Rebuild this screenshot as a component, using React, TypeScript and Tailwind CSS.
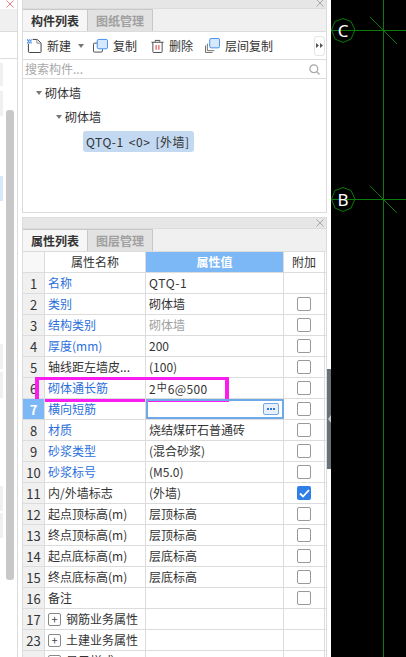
import React from "react";

const BLUE = "text-[#2b6fdc]";

type Row = {
  no: number;
  name: string;
  value?: React.ReactNode;
  blue?: boolean;
  muted?: boolean;
  box?: boolean;
  checked?: boolean;
  group?: boolean;
};

const ROWS: Row[] = [
  { no: 1, name: "名称", value: <span className="tracking-[0.6px]">QTQ-1</span>, blue: true },
  { no: 2, name: "类别", value: "砌体墙", blue: true, box: true },
  { no: 3, name: "结构类别", value: "砌体墙", blue: true, muted: true, box: true },
  { no: 4, name: "厚度(mm)", value: "200", blue: true, box: true },
  { no: 5, name: "轴线距左墙皮...", value: "(100)", box: true },
  {
    no: 6,
    name: "砌体通长筋",
    value: (
      <>
        2<span className="text-[10px] align-[3px] mx-[1px]">中</span>
        <span className="tracking-[0.4px]">6@500</span>
      </>
    ),
    blue: true,
    box: true,
  },
  { no: 7, name: "横向短筋", blue: true, box: true },
  { no: 8, name: "材质", value: "烧结煤矸石普通砖", blue: true, box: true },
  { no: 9, name: "砂浆类型", value: "(混合砂浆)", blue: true, box: true },
  { no: 10, name: "砂浆标号", value: "(M5.0)", blue: true, box: true },
  { no: 11, name: "内/外墙标志", value: "(外墙)", box: true, checked: true },
  { no: 12, name: "起点顶标高(m)", value: "层顶标高", box: true },
  { no: 13, name: "终点顶标高(m)", value: "层顶标高", box: true },
  { no: 14, name: "起点底标高(m)", value: "层底标高", box: true },
  { no: 15, name: "终点底标高(m)", value: "层底标高", box: true },
  { no: 16, name: "备注", box: true },
  { no: 17, name: "钢筋业务属性", group: true },
  { no: 23, name: "土建业务属性", group: true },
  { no: 35, name: "显示样式", group: true },
];

function CloseIcon({ color }: { color: string }) {
  return (
    <svg width="8" height="8" viewBox="0 0 8 8" fill="none" stroke={color} strokeWidth="1">
      <path d="M0.5 0.5L7.5 7.5M7.5 0.5L0.5 7.5" />
    </svg>
  );
}

function NewIcon() {
  return (
    <svg width="15" height="15" viewBox="0 0 16 16" fill="none">
      <path d="M1.5 5V14.5Q1.5 15.5 2.5 15.5H14Q15 15.5 15 14.5V5.5L11 1.5H6" stroke="#333" />
      <path d="M10.5 1.5V5.5H15" stroke="#888" />
      <rect x="0" y="1" width="5" height="5" fill="#5a9be8" />
      <path d="M1 1h1v1H1zM3 1h1v1H3zM0 3h1v1H0zM2 3h1v1H2zM4 3h1v1H4zM1 5h1v1H1zM3 5h1v1H3z" fill="#fff" />
    </svg>
  );
}

function CopyIcon() {
  return (
    <svg width="15" height="15" viewBox="0 0 16 16" fill="none">
      <path d="M4.5 5.5H1.5Q0.5 5.5 0.5 6.5V14Q0.5 15 1.5 15H9Q10 15 10 14V12" stroke="#444" />
      <rect x="4.5" y="1.5" width="11" height="10" rx="1.5" fill="#d6e8fc" stroke="#3b8bea" />
    </svg>
  );
}

function TrashIcon() {
  return (
    <svg width="13" height="14" viewBox="0 0 14 15" fill="none">
      <path d="M0.5 3.5H13.5M4.5 3V1.5H9.5V3" stroke="#444" />
      <path d="M2 3.5V13.5Q2 14.5 3 14.5H11Q12 14.5 12 13.5V3.5" stroke="#444" />
      <path d="M5.5 6.5V11.5M8.5 6.5V11.5" stroke="#d8232a" />
    </svg>
  );
}

function FloorCopyIcon() {
  return (
    <svg width="15" height="15" viewBox="0 0 16 16" fill="none">
      <path d="M0.5 15.5V8M0.5 15.5H8M2.5 13.5V6M2.5 13.5H10" stroke="#666" />
      <rect x="5" y="0.5" width="10.5" height="10" rx="1.5" fill="#d6e8fc" stroke="#3b8bea" />
    </svg>
  );
}

function Caret() {
  return <span className="w-0 h-0 border-x-[3.5px] border-x-transparent border-t-[4px] border-t-[#777]" />;
}

function ToolItem({ icon, label, gapClass }: { icon: React.ReactNode; label: string; gapClass: string }) {
  return (
    <div className={`flex items-center gap-[5px] ${gapClass}`}>
      {icon}
      <span>{label}</span>
    </div>
  );
}

function Tabs({ first, second }: { first: string; second: string }) {
  return (
    <div className="h-[23px] shrink-0 flex bg-[#f0f0f0] border-b border-[#dcdcdc]">
      <div className="w-[65px] bg-[#f6f6f6] border-t border-r border-[#c8c8c8] flex items-center justify-center font-bold text-[#333]">
        {first}
      </div>
      <div className="w-[65px] bg-[#e2e2e2] border-t border-r border-[#c8c8c8] flex items-center justify-center font-bold text-[#a0a0a0]">
        {second}
      </div>
    </div>
  );
}

function PanelHeader({ className }: { className: string }) {
  return (
    <div className={`flex justify-end items-end pr-[2px] pb-[1px] bg-[#e6e6e6] border-b border-[#dcdcdc] shrink-0 ${className}`}>
      <CloseIcon color="#a8a8a8" />
    </div>
  );
}

function LeftStrip() {
  return (
    <div className="w-[22px] shrink-0 h-full flex overflow-hidden">
      <div className="w-[18px] shrink-0 border-r border-[#dcdcdc] flex flex-col">
        <div className="h-[9px] shrink-0 flex justify-center items-start pl-[3px]">
          <CloseIcon color="#f08080" />
        </div>
        <div className="h-[23px] shrink-0 bg-[#f0f0f0] border-b border-[#dcdcdc]" />
        <div className="h-[27px] shrink-0 border-b border-[#dcdcdc]" />
        <div className="flex">
          <div className="w-[6px] shrink-0 flex flex-col">
            <div className="w-[3px] h-[23px] mt-[4px] bg-[#f0f0f0]" />
            <div className="w-[3px] h-[25px] mt-[5px] bg-[#f0f0f0]" />
            <div className="w-[3px] h-[25px] mt-[60px] bg-[#d8e8fb]" />
            <div className="w-[3px] h-[25px] mt-[143px] bg-[#f0f0f0]" />
            <div className="w-[3px] h-[26px] mt-[3px] bg-[#f0f0f0]" />
            <div className="w-[3px] h-[25px] mt-[88px] bg-[#f0f0f0]" />
            <div className="w-[3px] h-[25px] mt-[2px] bg-[#f0f0f0]" />
          </div>
          <div className="w-[8px] h-[470px] mt-[51px] bg-[#c8c8c8] rounded-[3px]" />
        </div>
      </div>
    </div>
  );
}

function TablePanel() {
  return (
    <div className="flex-1 min-h-0 mt-[4px] border-x border-t border-[#dcdcdc] flex flex-col overflow-hidden">
      <PanelHeader className="h-[11px]" />
      <Tabs first="属性列表" second="图层管理" />
      <div className="flex h-[21px] shrink-0 border-b border-[#dcdcdc] text-[#333]">
        <div className="w-[22px] shrink-0 bg-[#f8f8f8] border-r border-[#dcdcdc]" />
        <div className="w-[101px] shrink-0 border-r border-[#dcdcdc] flex items-center justify-center">属性名称</div>
        <div className="w-[138px] shrink-0 bg-[#7db8f6] border-r border-[#dcdcdc] flex items-center justify-center text-white font-bold">
          属性值
        </div>
        <div className="w-[41px] shrink-0 border-r border-[#dcdcdc] flex items-center justify-center">附加</div>
      </div>
      {ROWS.map((r) => {
        const active = r.no === 7;
        return (
          <div key={r.no} className="relative flex h-[21px] shrink-0 border-b border-[#dcdcdc] text-[#333]">
            <div
              className={
                active
                  ? "w-[22px] shrink-0 bg-[#7db8f6] border-r border-[#dcdcdc] flex items-center justify-center text-white font-bold text-[13px]"
                  : "w-[22px] shrink-0 bg-[#f0f0f0] border-r border-[#dcdcdc] flex items-center justify-center text-[13px]"
              }
            >
              {r.no}
            </div>
            <div
              className={`w-[101px] shrink-0 border-r border-[#dcdcdc] flex items-center pl-[3px] whitespace-nowrap ${
                r.blue ? BLUE : ""
              }`}
            >
              {r.group && (
                <span className="w-[13px] h-[13px] mr-[5px] border border-[#888] rounded-[2px] flex items-center justify-center text-[11px] leading-none text-[#444]">
                  +
                </span>
              )}
              {r.name}
            </div>
            {active ? (
              <div className="w-[138px] shrink-0 border-2 border-[#6eaaea] flex items-center justify-end pr-[3px]">
                <span className="w-[16px] h-[12px] border border-[#6eaaea] rounded-[2px] bg-[#e8f1fb] flex items-center justify-center gap-[1px]">
                  <i className="w-[2px] h-[2px] bg-[#2f7ad8]" />
                  <i className="w-[2px] h-[2px] bg-[#2f7ad8]" />
                  <i className="w-[2px] h-[2px] bg-[#2f7ad8]" />
                </span>
              </div>
            ) : (
              <div
                className={`w-[138px] shrink-0 border-r border-[#dcdcdc] flex items-center pl-[3px] whitespace-pre ${
                  r.muted ? "text-[#a0a0a0]" : ""
                }`}
              >
                <span>{r.value}</span>
              </div>
            )}
            <div className="w-[41px] shrink-0 border-r border-[#dcdcdc] flex items-center justify-center">
              {r.box &&
                (r.checked ? (
                  <span className="w-[14px] h-[14px] rounded-[2px] bg-[#2f80e6] flex items-center justify-center">
                    <svg width="11" height="9" viewBox="0 0 11 9" fill="none" stroke="#fff" strokeWidth="1.8">
                      <path d="M1 4.5L4 7.5L10 1" />
                    </svg>
                  </span>
                ) : (
                  <span className="w-[14px] h-[14px] rounded-[2px] border border-[#999] bg-white" />
                ))}
            </div>
            {r.no === 6 && (
              <div className="absolute left-[12px] top-[-1px] w-[194px] h-[25px] border-x-4 border-y-[3px] border-[#fb1df0] pointer-events-none" />
            )}
          </div>
        );
      })}
    </div>
  );
}

function ListPanel() {
  return (
    <div className="h-[213px] shrink-0 border-x border-b border-[#dcdcdc] flex flex-col">
      <PanelHeader className="h-[9px]" />
      <Tabs first="构件列表" second="图纸管理" />
      <div className="h-[28px] shrink-0 flex items-center pl-[4px] pr-[1px] border-b border-[#dcdcdc] text-[#333]">
        <ToolItem icon={<NewIcon />} label="新建" gapClass="mr-[7px]" />
        <Caret />
        <div className="w-[9px]" />
        <ToolItem icon={<CopyIcon />} label="复制" gapClass="mr-[14px]" />
        <ToolItem icon={<TrashIcon />} label="删除" gapClass="mr-[12px]" />
        <ToolItem icon={<FloorCopyIcon />} label="层间复制" gapClass="" />
        <div className="ml-auto w-[11px] h-[20px] bg-white border border-[#e4e4e4] rounded-[3px] flex items-center justify-center">
          <svg width="7" height="5" viewBox="0 0 7 5" fill="#555">
            <path d="M0 0L3 2.5L0 5zM4 0L7 2.5L4 5z" />
          </svg>
        </div>
      </div>
      <div className="h-[19px] shrink-0 flex items-center justify-between pl-[2px] pr-[6px] border-b border-[#dcdcdc] text-[#a8a8a8]">
        <span>搜索构件...</span>
        <svg width="11" height="11" viewBox="0 0 11 11" fill="none" stroke="#a8a8a8" strokeWidth="1.3">
          <circle cx="4.8" cy="4.8" r="3.9" />
          <path d="M7.8 7.8L10.5 10.5" />
        </svg>
      </div>
      <div className="flex-1 flex flex-col text-[#333] pt-[3px]">
        <div className="h-[21px] flex items-center gap-[3px] pl-[13px]">
          <Caret />
          <span>砌体墙</span>
        </div>
        <div className="h-[21px] mt-[3px] flex items-center gap-[3px] pl-[33px]">
          <Caret />
          <span>砌体墙</span>
        </div>
        <div className="h-[21px] ml-[60px] w-[111px] mt-[4px] rounded-[3px] bg-[#c2d9f1] flex items-center pl-[3px] whitespace-pre tracking-[0.5px] [word-spacing:2px]">
          {"QTQ-1 <0> [外墙]"}
        </div>
      </div>
    </div>
  );
}

function Canvas() {
  return (
    <div className="flex-1 h-full bg-black">
      <svg width="75" height="657" viewBox="331 0 75 657" fill="none">
        <g stroke="#0a7a0a" strokeWidth="1">
          <path d="M383.5 0V657M331 30.5H406M331 199.5H406M370 17L397 44M370 186L397 213" />
          <path d="M343 18.5L351 21.5L355 30L351 39L343 42.5L335 39L331.5 30L335 21.5Z" />
          <path d="M343 187.5L351 190.5L355 199L351 208L343 211.5L335 208L331.5 199L335 190.5Z" />
        </g>
        <text x="343" y="37" fill="#fff" fontSize="17" textAnchor="middle" fontFamily="'Noto Sans', sans-serif">
          C
        </text>
        <text x="343" y="206" fill="#fff" fontSize="17" textAnchor="middle" fontFamily="'Noto Sans', sans-serif">
          B
        </text>
      </svg>
    </div>
  );
}

export default function App() {
  return (
    <div
      className="w-[406px] h-[657px] flex bg-white overflow-hidden text-[12px] leading-none"
      style={{ fontFamily: "'Noto Sans CJK SC', 'Noto Sans', sans-serif" }}
    >
      <LeftStrip />
      <div className="w-[305px] shrink-0 h-full flex flex-col">
        <ListPanel />
        <TablePanel />
      </div>
      <div className="w-[4px] shrink-0 h-full">
        <div className="w-full h-[100px] mt-[369px] bg-[#68717a] flex items-center justify-end">
          <span className="w-0 h-0 border-y-[4px] border-y-transparent border-r-[3px] border-r-[#c8c8c8]" />
        </div>
      </div>
      <Canvas />
    </div>
  );
}
